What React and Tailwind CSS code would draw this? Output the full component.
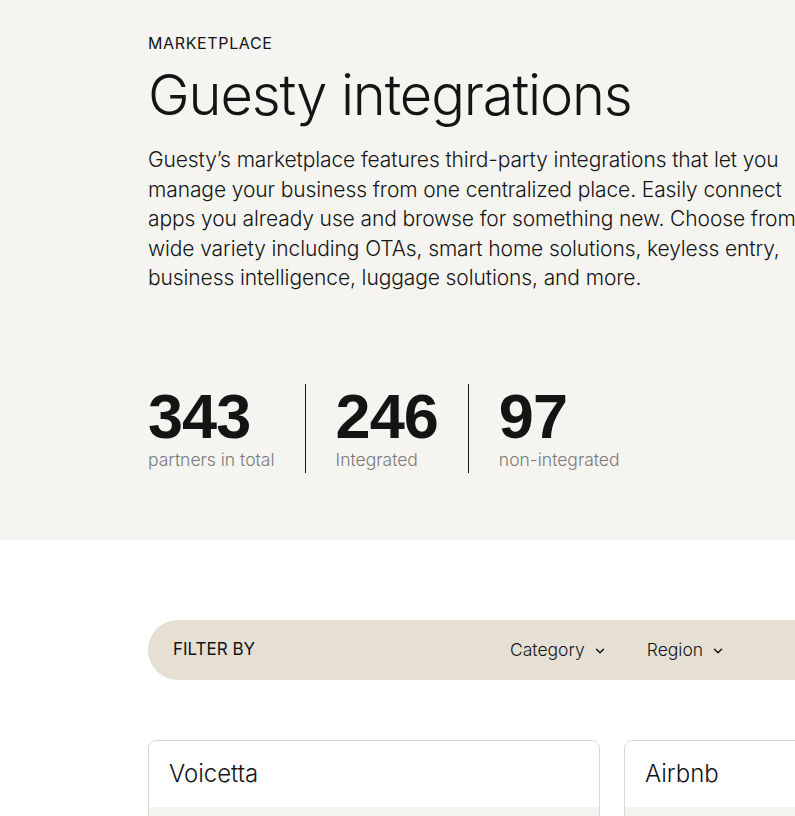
import { ChevronDown } from "lucide-react";

const stats = [
  { value: "343", label: "partners in total" },
  { value: "246", label: "Integrated" },
  { value: "97", label: "non-integrated" },
];

const partners = ["Voicetta", "Airbnb", "Booking.com"];

export default function App() {
  return (
    <div className="w-full overflow-hidden bg-white text-[#141414]" style={{ fontFamily: "Inter, 'Noto Sans', sans-serif" }}>
      {/* hero */}
      <section className="bg-[#f5f4f0] h-[540px] pl-[148px] pt-[33px]">
        <p className="text-[16px] leading-[20px] tracking-[0.04em] uppercase">Marketplace</p>
        <h1 className="mt-[10px] text-[56px] leading-[64px] font-light tracking-[-0.02em] whitespace-nowrap">
          Guesty integrations
        </h1>
        <p className="mt-[18px] w-[668px] text-[21px] leading-[29.6px] font-light tracking-[-0.005em]">
          Guesty’s marketplace features third-party integrations that let you manage your business from one
          centralized place. Easily connect apps you already use and browse for something new. Choose from a wide
          variety including OTAs, smart home solutions, keyless entry, business intelligence, luggage solutions, and
          more.
        </p>

        <div className="mt-[91px] flex">
          {stats.map((s, i) => (
            <div
              key={s.label}
              className={`flex flex-col h-[89px] ${i > 0 ? "pl-[30px]" : ""} ${
                i < stats.length - 1 ? "pr-[30px] border-r border-[#141414]" : ""
              }`}
            >
              <span
                className="text-[63px] leading-[64px] font-bold tracking-[-0.015em]"
                style={{ fontFamily: "'Liberation Sans', Arial, sans-serif" }}
              >
                {s.value}
              </span>
              <span className="mt-[1px] text-[17.5px] leading-[22px] text-[#7a7a7a] font-light">{s.label}</span>
            </div>
          ))}
        </div>
      </section>

      {/* filters + list */}
      <section className="pl-[148px] pt-[80px]">
        <div className="w-[1404px]">
          <div className="h-[60px] rounded-full bg-[#e6e0d4] flex items-center pl-[25px]">
            <span className="text-[17px] font-normal uppercase w-[337px]">Filter by</span>
            <button className="flex items-center gap-[8px] text-[17.5px] font-light">
              Category <ChevronDown size={14} strokeWidth={2.5} className="mt-[2px]" />
            </button>
            <button className="ml-[40px] flex items-center gap-[8px] text-[17.5px] font-light">
              Region <ChevronDown size={14} strokeWidth={2.5} className="mt-[2px]" />
            </button>
          </div>

          <div className="mt-[60px] grid grid-cols-3 gap-[24px]">
            {partners.map((name) => (
              <div key={name} className="h-[300px] rounded-[8px] border border-[#d6d6d6] overflow-hidden flex flex-col">
                <div className="h-[66px] bg-white flex items-center px-[20px]">
                  <span className="text-[24px] font-light">{name}</span>
                </div>
                <div className="flex-1 bg-[#f6f4f0]" />
              </div>
            ))}
          </div>
        </div>
      </section>
    </div>
  );
}
